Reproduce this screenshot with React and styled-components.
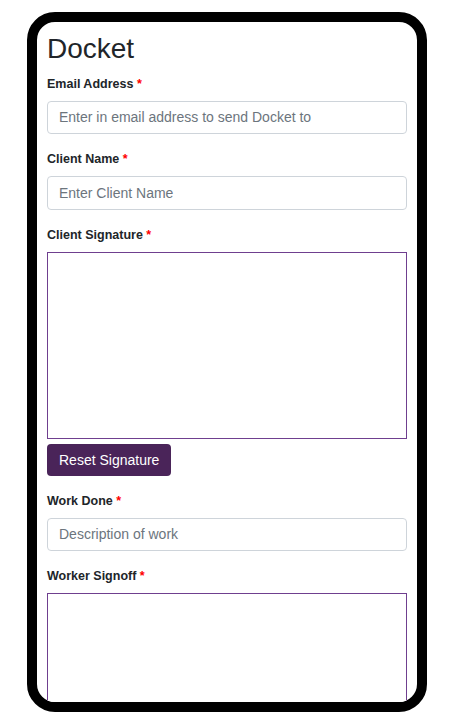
import styled, { createGlobalStyle } from "styled-components";

const GlobalStyle = createGlobalStyle`
  body {
    margin: 0;
    background: #fff;
    font-family: "Liberation Sans", Arial, Helvetica, sans-serif;
    color: #212529;
  }
  * {
    box-sizing: border-box;
  }
`;

const Page = styled.div`
  display: flex;
  padding: 12px 0 0 27px;
`;

const Phone = styled.div`
  width: 400px;
  height: 700px;
  border: 10px solid #000;
  border-radius: 28px;
  background: #fff;
  overflow: hidden;
`;

const Screen = styled.form`
  padding: 10px;
`;

const Title = styled.h1`
  margin: 0 0 9px;
  font-size: 28px;
  font-weight: 400;
  line-height: 1.2;
  color: #212529;
`;

const Field = styled.div`
  margin-bottom: 16px;
`;

const Label = styled.label`
  display: block;
  margin-bottom: 8px;
  font-size: 12.5px;
  font-weight: 700;
  line-height: 18px;
  color: #212529;
`;

const Required = styled.span`
  color: #ff0000;
`;

const Input = styled.input`
  display: block;
  width: 100%;
  height: 33.5px;
  padding: 0 11px;
  border: 1px solid #ced4da;
  border-radius: 4px;
  font-family: inherit;
  font-size: 14px;
  color: #212529;
  background: #fff;

  &::placeholder {
    color: #6c757d;
  }
`;

const SignaturePad = styled.canvas`
  display: block;
  width: 360px;
  height: 187px;
  border: 1px solid #6f3f8f;
  background: #fff;
`;

const ResetButton = styled.button`
  display: block;
  margin-top: 5px;
  height: 32px;
  padding: 0 12px;
  border: none;
  border-radius: 4px;
  background: #4a2459;
  color: #fff;
  font-family: inherit;
  font-size: 14px;
  cursor: pointer;
`;

const fields = [
  { name: "email", label: "Email Address", placeholder: "Enter in email address to send Docket to" },
  { name: "client", label: "Client Name", placeholder: "Enter Client Name" },
  { name: "clientSig", label: "Client Signature", signature: true, reset: true },
  { name: "work", label: "Work Done", placeholder: "Description of work" },
  { name: "workerSig", label: "Worker Signoff", signature: true },
];

export default function App() {
  return (
    <>
      <GlobalStyle />
      <Page>
        <Phone>
          <Screen onSubmit={(e) => e.preventDefault()}>
            <Title>Docket</Title>
            {fields.map((f) => (
              <Field key={f.name}>
                <Label htmlFor={f.name}>
                  {f.label} <Required>*</Required>
                </Label>
                {f.signature ? (
                  <SignaturePad id={f.name} width={358} height={185} />
                ) : (
                  <Input id={f.name} placeholder={f.placeholder} />
                )}
                {f.reset && <ResetButton type="button">Reset Signature</ResetButton>}
              </Field>
            ))}
          </Screen>
        </Phone>
      </Page>
    </>
  );
}
